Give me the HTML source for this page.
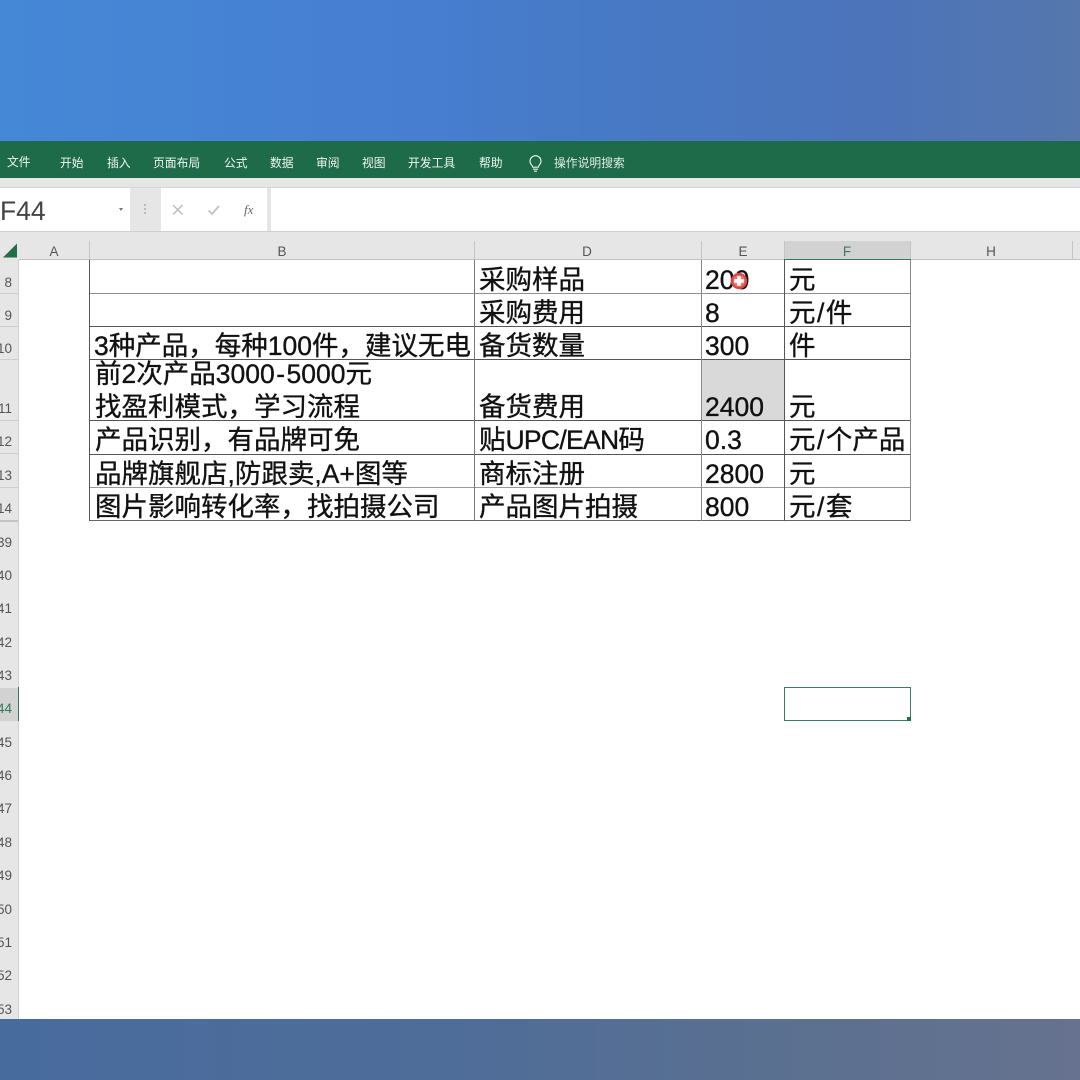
<!DOCTYPE html>
<html lang="zh">
<head>
<meta charset="utf-8">
<style>
html,body{margin:0;padding:0;width:1080px;height:1080px;overflow:hidden;background:#fff}
body{position:relative;font-family:"Liberation Sans","Noto Sans CJK SC",sans-serif}
div{position:absolute;box-sizing:border-box}
.top{left:0;top:0;width:1080px;height:142px;background:linear-gradient(90deg,#4588d6 0%,#477fd2 35%,#4779c4 58%,#4c74bb 80%,#5577ad 100%)}
.bot{left:0;top:1019px;width:1080px;height:61px;background:linear-gradient(90deg,#486b9e 0%,#4f6d98 45%,#5c7090 75%,#66728f 100%)}
.rib{left:0;top:141px;width:1080px;height:37px;background:#1d6b48}
.m{top:154px;color:#f1f6f3;font-size:11.8px;line-height:18px;white-space:nowrap;font-family:"Noto Sans CJK SC",sans-serif}
.band{background:#e6e6e6}
.wh{background:#fff}
.c{top:243px;height:17px;line-height:17px;font-size:13.5px;color:#555;text-align:center;width:30px}
.s{top:241px;width:1px;height:19px;background:#c4c4c4}
.r{left:-20px;width:32px;text-align:right;font-size:13.5px;line-height:16px;color:#555}
.h{height:1px;left:89px;width:822px}
.v{width:1px;top:260px;height:261px}
.t{font-family:"Liberation Sans","WenQuanYi Zen Hei","Noto Sans CJK SC",sans-serif;font-size:26.5px;line-height:34px;height:34px;color:#111;white-space:nowrap;-webkit-text-stroke:.35px #111}
.p{padding:0 1.5px}
</style>
</head>
<body>
<div class="top"></div>
<div class="rib"></div>
<div class="m" style="left:7px;top:153px">文件</div>
<div class="m" style="left:60px">开始</div>
<div class="m" style="left:107px">插入</div>
<div class="m" style="left:153px">页面布局</div>
<div class="m" style="left:224px">公式</div>
<div class="m" style="left:270px">数据</div>
<div class="m" style="left:316px">审阅</div>
<div class="m" style="left:362px">视图</div>
<div class="m" style="left:408px">开发工具</div>
<div class="m" style="left:479px">帮助</div>
<svg style="position:absolute;left:528px;top:155px" width="15" height="18" viewBox="0 0 15 18" fill="none" stroke="#eef4f0" stroke-width="1.1"><path d="M4.8 12.2C4.6 10.4 2 9.2 2 6.2a5.5 5.5 0 0 1 11 0c0 3-2.600 4.200-2.800 6z"/><path d="M5 14.200h5M6 16.200h3"/></svg>
<div class="m" style="left:554px;color:#dfeae4">操作说明搜索</div>

<div class="band" style="left:0;top:178px;width:1080px;height:82px"></div>
<div style="left:0;top:187px;width:1080px;height:1px;background:#d4d4d4"></div>
<div class="wh" style="left:0;top:188px;width:130px;height:43px"></div>
<div style="left:0;top:194px;font-size:26.5px;line-height:34px;color:#444">F44</div>
<div style="left:119px;top:208px;width:0;height:0;border-left:2.500px solid transparent;border-right:2.500px solid transparent;border-top:3px solid #777"></div>
<div style="left:144px;top:204px;width:2px;height:2px;background:#bbb;box-shadow:0 4px 0 #bbb,0 8px 0 #bbb"></div>
<div class="wh" style="left:161px;top:188px;width:106px;height:43px"></div>
<svg style="position:absolute;left:171px;top:203px" width="14" height="14" viewBox="0 0 14 14" fill="none" stroke="#b9b9b9" stroke-width="1.300"><path d="M2 2l9.500 9.500M11.500 2L2 11.500"/></svg>
<svg style="position:absolute;left:207px;top:203px" width="14" height="14" viewBox="0 0 14 14" fill="none" stroke="#c2c2c2" stroke-width="1.800"><path d="M1.500 7.500l3.500 3.500L12 3"/></svg>
<div style="left:244px;top:201px;font-family:'Liberation Serif',serif;font-style:italic;font-size:13px;line-height:18px;color:#666">fx</div>
<div class="wh" style="left:271px;top:188px;width:809px;height:43px"></div>
<div style="left:0;top:231px;width:1080px;height:1px;background:#cfcfcf"></div>

<svg style="position:absolute;left:3px;top:243px" width="15" height="15" viewBox="0 0 15 15"><path d="M14 0.500V14.500H0z" fill="#1f6f4a"/></svg>
<div style="left:784px;top:241px;width:126px;height:19px;background:#d2d2d2"></div>
<div class="c" style="left:39px">A</div>
<div class="c" style="left:267px">B</div>
<div class="c" style="left:572px">D</div>
<div class="c" style="left:728px">E</div>
<div class="c" style="left:832px;color:#3d7a60">F</div>
<div class="c" style="left:976px">H</div>
<div class="s" style="left:89px"></div>
<div class="s" style="left:474px"></div>
<div class="s" style="left:701px"></div>
<div class="s" style="left:784px"></div>
<div class="s" style="left:910px"></div>
<div class="s" style="left:1072px"></div>
<div style="left:19px;top:259px;width:1061px;height:1px;background:#c0c0c0"></div>
<div style="left:784px;top:259px;width:127px;height:1px;background:#2f7a5a"></div>

<div class="band" style="left:0;top:260px;width:19px;height:759px"></div>
<div style="left:18px;top:260px;width:1px;height:759px;background:#d0d0d0"></div>
<div style="left:0;top:293px;width:18px;height:1px;background:#cfcfcf"></div>
<div style="left:0;top:326px;width:18px;height:1px;background:#cfcfcf"></div>
<div style="left:0;top:359px;width:18px;height:1px;background:#cfcfcf"></div>
<div style="left:0;top:420px;width:18px;height:1px;background:#cfcfcf"></div>
<div style="left:0;top:453px;width:18px;height:1px;background:#cfcfcf"></div>
<div style="left:0;top:487px;width:18px;height:1px;background:#cfcfcf"></div>
<div style="left:0;top:520px;width:18px;height:2px;background:#c4c4c4"></div>
<div style="left:0;top:688px;width:19px;height:33px;background:#d2d2d2"></div>
<div style="left:18px;top:687px;width:1px;height:34px;background:#2f7a5a"></div>

<div class="r" style="top:275px">8</div>
<div class="r" style="top:308px">9</div>
<div class="r" style="top:341px">10</div>
<div class="r" style="top:401px">11</div>
<div class="r" style="top:434px">12</div>
<div class="r" style="top:468px">13</div>
<div class="r" style="top:501px">14</div>
<div class="r" style="top:535px">39</div>
<div class="r" style="top:568px">40</div>
<div class="r" style="top:601px">41</div>
<div class="r" style="top:635px">42</div>
<div class="r" style="top:668px">43</div>
<div class="r" style="top:701px;color:#2f7a5a">44</div>
<div class="r" style="top:735px">45</div>
<div class="r" style="top:768px">46</div>
<div class="r" style="top:801px">47</div>
<div class="r" style="top:835px">48</div>
<div class="r" style="top:868px">49</div>
<div class="r" style="top:902px">50</div>
<div class="r" style="top:935px">51</div>
<div class="r" style="top:968px">52</div>
<div class="r" style="top:1002px">53</div>

<div style="left:702px;top:360px;width:82px;height:60px;background:#d9d9d9"></div>

<div class="h" style="top:293px;background:#8f8f8f"></div>
<div class="h" style="top:326px;background:#555"></div>
<div class="h" style="top:359px;background:#555"></div>
<div class="h" style="top:420px;background:#555"></div>
<div class="h" style="top:454px;background:#555"></div>
<div class="h" style="top:487px;background:#999"></div>
<div class="h" style="top:520px;background:#666"></div>
<div class="v" style="left:89px;background:#555"></div>
<div class="v" style="left:474px;background:#777"></div>
<div class="v" style="left:701px;background:#888"></div>
<div class="v" style="left:784px;background:#555"></div>
<div class="v" style="left:910px;background:#888"></div>

<div class="t" style="left:94px;top:329px">3种产品，每种100件，建议无电</div>
<div class="t" style="left:95px;top:357px">前2次产品3000<span class="p">-</span>5000元</div>
<div class="t" style="left:95px;top:390px">找盈利模式，学习流程</div>
<div class="t" style="left:95px;top:423px">产品识别，有品牌可免</div>
<div class="t" style="left:95px;top:457px">品牌旗舰店,防跟卖,A+图等</div>
<div class="t" style="left:95px;top:490px">图片影响转化率，找拍摄公司</div>

<div class="t" style="left:479px;top:263px">采购样品</div>
<div class="t" style="left:479px;top:296px">采购费用</div>
<div class="t" style="left:479px;top:329px">备货数量</div>
<div class="t" style="left:479px;top:390px">备货费用</div>
<div class="t" style="left:479px;top:423px">贴<span style="letter-spacing:-.7px">UPC/EAN</span>码</div>
<div class="t" style="left:479px;top:457px">商标注册</div>
<div class="t" style="left:479px;top:490px">产品图片拍摄</div>

<div class="t" style="left:705px;top:263px">200</div>
<div class="t" style="left:705px;top:296px">8</div>
<div class="t" style="left:705px;top:329px">300</div>
<div class="t" style="left:705px;top:390px">2400</div>
<div class="t" style="left:705px;top:423px">0.3</div>
<div class="t" style="left:705px;top:457px">2800</div>
<div class="t" style="left:705px;top:490px">800</div>

<div class="t" style="left:789px;top:263px">元</div>
<div class="t" style="left:789px;top:296px">元<span class="p">/</span>件</div>
<div class="t" style="left:789px;top:329px">件</div>
<div class="t" style="left:789px;top:390px">元</div>
<div class="t" style="left:789px;top:423px">元<span class="p">/</span>个产品</div>
<div class="t" style="left:789px;top:457px">元</div>
<div class="t" style="left:789px;top:490px">元<span class="p">/</span>套</div>

<svg style="position:absolute;left:730px;top:272px" width="18" height="18" viewBox="0 0 18 18"><circle cx="9" cy="9" r="7" fill="#eb7a74" stroke="#dd4a45" stroke-width="2.400"/><path d="M9 4.200v9.600M4.200 9h9.600" stroke="#fff" stroke-width="3.600"/></svg>

<div style="left:784px;top:687px;width:127px;height:34px;border:1px solid #3c7a62"></div>
<div style="left:907px;top:717px;width:4px;height:4px;background:#1f6f4a"></div>

<div class="bot"></div>
</body>
</html>
